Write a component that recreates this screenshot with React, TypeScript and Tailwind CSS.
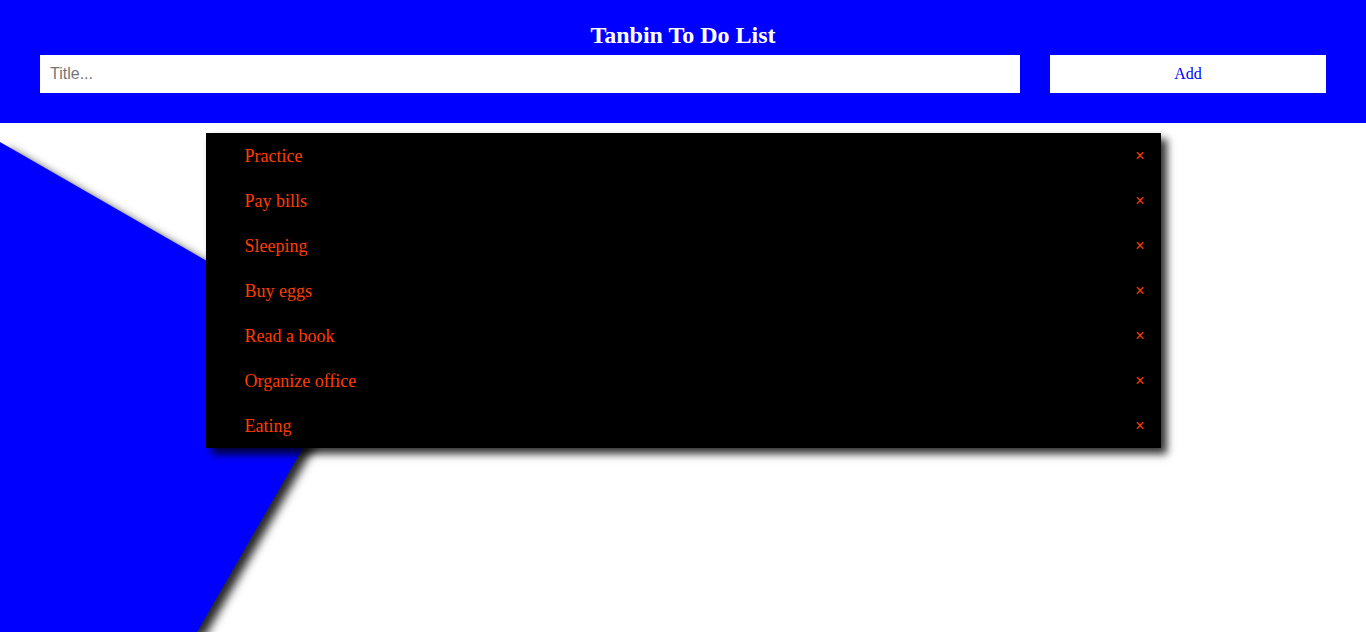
import React, { useState } from "react";

const serif = "font-['Liberation_Serif','Times_New_Roman',serif]";

const initialTodos = [
  "Practice",
  "Pay bills",
  "Sleeping",
  "Buy eggs",
  "Read a book",
  "Organize office",
  "Eating",
];

const App = () => {
  const [todos, setTodos] = useState<string[]>(initialTodos);
  const [title, setTitle] = useState("");

  const addTodo = () => {
    if (title.trim() === "") return;
    setTodos([...todos, title.trim()]);
    setTitle("");
  };

  return (
    <div className="relative min-h-[632px] bg-white overflow-hidden">
      {/* blue slanted shape behind the list */}
      <div className="absolute inset-0 pointer-events-none drop-shadow-[7px_6px_5px_rgba(0,0,0,0.85)]">
        <div className="w-full h-full bg-[#0000ff] [clip-path:polygon(0_142px,360px_349px,197px_632px,0_632px)]"></div>
      </div>

      <div className="relative bg-[#0000ff] px-10 pt-[19px] pb-[30px]">
        <h2 className={serif + " text-white text-2xl font-bold text-center leading-[33px] mb-[3px]"}>
          Tanbin To Do List
        </h2>
        <div className="flex gap-[30px]">
          <input
            value={title}
            onChange={(e) => setTitle(e.target.value)}
            placeholder="Title..."
            className="flex-1 h-[38px] bg-white px-[10px] text-base font-['Liberation_Sans',Arial,sans-serif] text-black placeholder:text-[#757575] outline-none"
          />
          <button
            onClick={addTodo}
            className={serif + " w-[276px] h-[38px] bg-white text-[#0000ff] text-base"}
          >
            Add
          </button>
        </div>
      </div>

      <ul className="relative w-[955px] mx-auto mt-[10px] bg-black shadow-[6px_6px_8px_rgba(0,0,0,0.8)]">
        {todos.map((todo, i) => (
          <li key={i} className="h-[45px] flex items-center justify-between pl-[39px] pr-[16px]">
            <span className={serif + " text-[18px] leading-[22px] pt-[1px] text-[#ff3c00]"}>{todo}</span>
            <span
              onClick={() => setTodos(todos.filter((_, j) => j !== i))}
              className="text-[16px] leading-[22px] pt-[1px] text-[#ff3c00] font-['Liberation_Sans',Arial,sans-serif] cursor-pointer"
            >
              ×
            </span>
          </li>
        ))}
      </ul>
    </div>
  );
};

export default App;
